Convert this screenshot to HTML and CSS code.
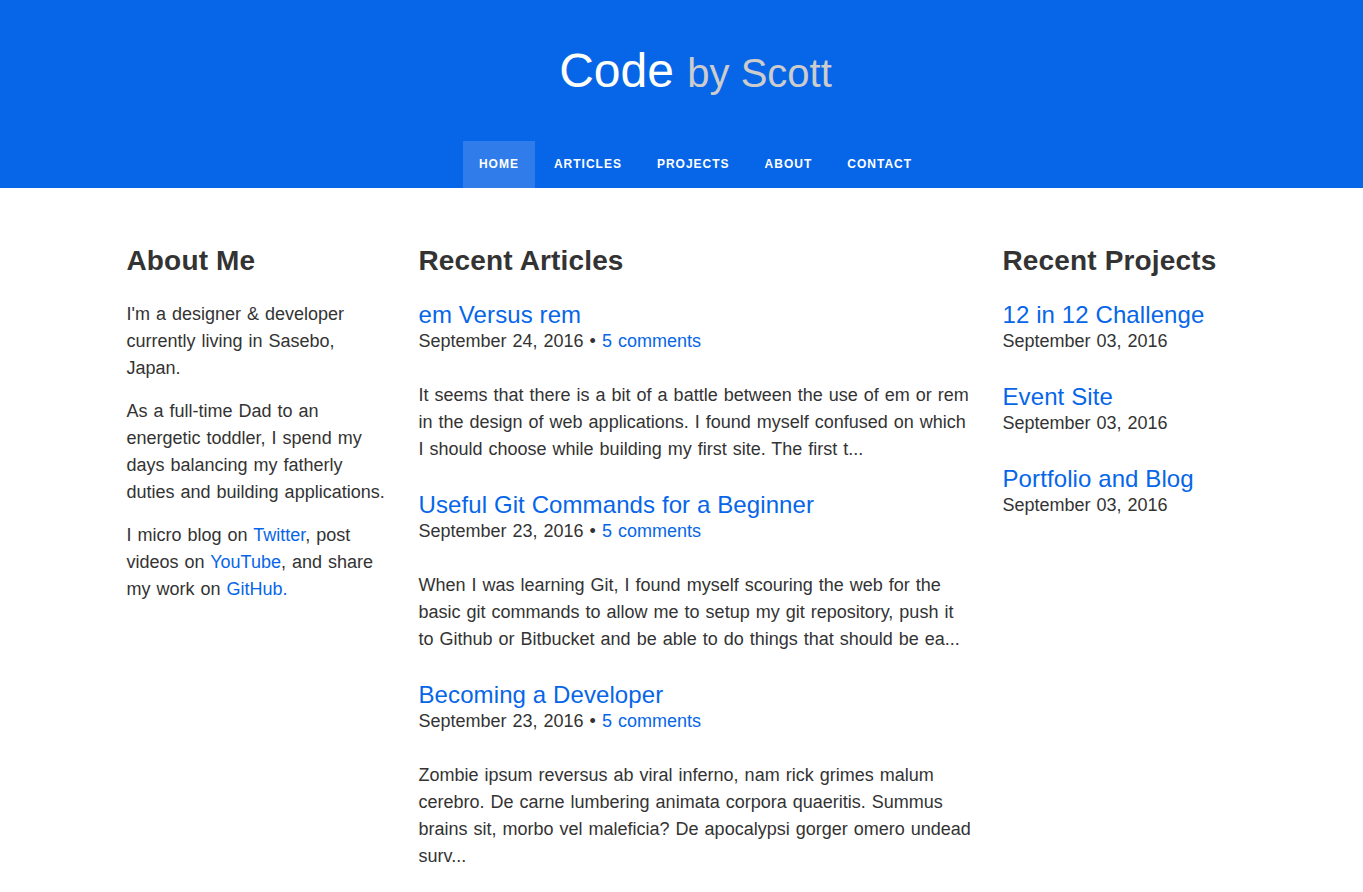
FILE: index.html
```html
<!DOCTYPE html>
<html lang="en">
<head>
<meta charset="utf-8">
<title>Code by Scott</title>
<link rel="stylesheet" href="styles.css">
</head>
<body>
<header class="site-header">
  <h1 class="brand">Code <span class="brand-sub">by Scott</span></h1>
  <nav class="nav">
    <a class="nav-item active" href="#">Home</a>
    <a class="nav-item" href="#">Articles</a>
    <a class="nav-item" href="#">Projects</a>
    <a class="nav-item" href="#">About</a>
    <a class="nav-item" href="#">Contact</a>
  </nav>
</header>
<main class="content">
  <section class="col about">
    <h2 class="col-title">About Me</h2>
    <p>I'm a designer &amp; developer currently living in Sasebo, Japan.</p>
    <p>As a full-time Dad to an energetic toddler, I spend my days balancing my fatherly duties and building applications.</p>
    <p>I micro blog on <a href="#">Twitter</a>, post videos on <a href="#">YouTube</a>, and share my work on <a href="#">GitHub.</a></p>
  </section>
  <section class="col articles">
    <h2 class="col-title">Recent Articles</h2>
    <article class="post">
      <h3 class="post-title"><a href="#">em Versus rem</a></h3>
      <div class="meta">September 24, 2016 &bull; <a href="#">5 comments</a></div>
      <p class="excerpt">It seems that there is a bit of a battle between the use of em or rem in the design of web applications. I found myself confused on which I should choose while building my first site. The first t...</p>
    </article>
    <article class="post">
      <h3 class="post-title"><a href="#">Useful Git Commands for a Beginner</a></h3>
      <div class="meta">September 23, 2016 &bull; <a href="#">5 comments</a></div>
      <p class="excerpt">When I was learning Git, I found myself scouring the web for the basic git commands to allow me to setup my git repository, push it to Github or Bitbucket and be able to do things that should be ea...</p>
    </article>
    <article class="post">
      <h3 class="post-title"><a href="#">Becoming a Developer</a></h3>
      <div class="meta">September 23, 2016 &bull; <a href="#">5 comments</a></div>
      <p class="excerpt">Zombie ipsum reversus ab viral inferno, nam rick grimes malum cerebro. De carne lumbering animata corpora quaeritis. Summus brains sit, morbo vel maleficia? De apocalypsi gorger omero undead surv...</p>
    </article>
  </section>
  <section class="col projects">
    <h2 class="col-title">Recent Projects</h2>
    <div class="project">
      <h3 class="post-title"><a href="#">12 in 12 Challenge</a></h3>
      <div class="meta">September 03, 2016</div>
    </div>
    <div class="project">
      <h3 class="post-title"><a href="#">Event Site</a></h3>
      <div class="meta">September 03, 2016</div>
    </div>
    <div class="project">
      <h3 class="post-title"><a href="#">Portfolio and Blog</a></h3>
      <div class="meta">September 03, 2016</div>
    </div>
  </section>
</main>
</body>
</html>
```
FILE: styles.css
```css
* { box-sizing: border-box; }
html, body { margin: 0; padding: 0; }
body {
  font-family: "Liberation Sans", Arial, Helvetica, sans-serif;
  font-size: 18px;
  line-height: 27px;
  word-spacing: 1px;
  color: #333333;
  background: #ffffff;
}
a { color: #0766e8; text-decoration: none; }

.site-header {
  background: #0766e8;
  padding: 44px 0 0 28px;
  text-align: center;
}
.brand {
  margin: 0;
  font-size: 48px;
  line-height: 53px;
  font-weight: normal;
  word-spacing: 0;
  color: #fffffa;
}
.brand-sub {
  font-size: 40px;
  color: #cccccc;
}
.nav {
  margin-top: 41px;
  display: flex;
  justify-content: center;
  gap: 3px;
}
.nav-item {
  display: block;
  padding: 0 16px;
  height: 47px;
  line-height: 47px;
  font-size: 12px;
  font-weight: bold;
  letter-spacing: 1px;
  text-transform: uppercase;
  color: #ffffff;
}
.nav-item.active { background: #2f7cea; }

.content {
  width: 1109px;
  margin: 0 auto;
  padding: 56px 0 20px;
  display: grid;
  grid-template-columns: 262px 554px 1fr;
  column-gap: 30px;
  transform: translateX(-0.5px);
}
.col-title {
  margin: 0 0 23px;
  font-size: 28px;
  line-height: 34px;
  font-weight: bold;
  letter-spacing: 0.15px;
  word-spacing: 0;
  color: #333333;
}
.articles .col-title,
.projects .col-title { margin-bottom: 24px; }
.about p { margin: 0 0 16px; }
.post-title {
  margin: 0;
  font-size: 24px;
  line-height: 26px;
  font-weight: normal;
  letter-spacing: 0.1px;
  word-spacing: 0;
}
.meta { line-height: 27px; }
.excerpt { margin: 27px 0 29px; }
.project { margin-bottom: 29px; }
```
